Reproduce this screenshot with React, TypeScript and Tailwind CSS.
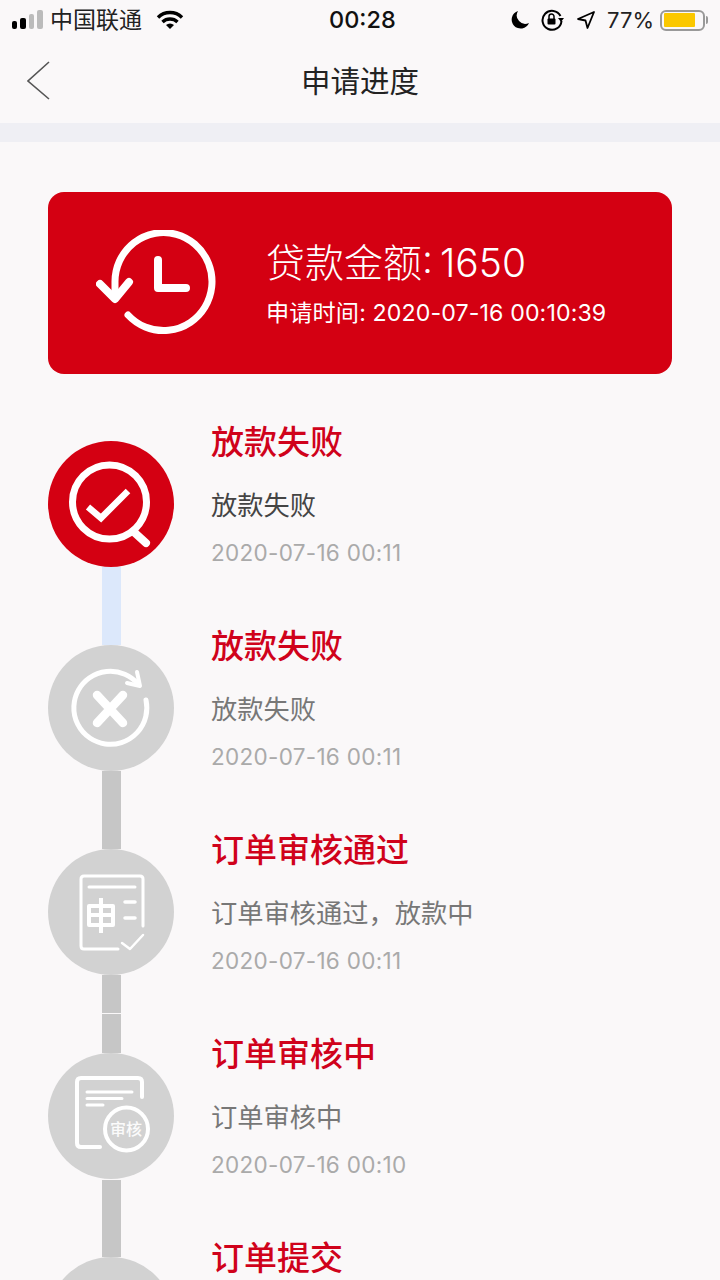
import type { ReactNode } from "react";

// stack for every text on the page: latin digits first, then CJK
const font = "font-['Inter','Noto_Sans_CJK_SC',sans-serif]";

function SearchCheckIcon() {
  return (
    <svg width="126" height="126" viewBox="0 0 126 126" fill="none" stroke="white" strokeLinecap="round" strokeLinejoin="round">
      <circle cx="61.5" cy="61" r="37" strokeWidth="7" />
      <path d="M87 92l11 10" strokeWidth="8" />
      <path d="M40 66l13 11 27-27" strokeWidth="6.500" strokeLinecap="butt" strokeLinejoin="miter" />
    </svg>
  );
}

function RetryCrossIcon() {
  return (
    <svg width="126" height="126" viewBox="0 0 126 126" fill="none" stroke="white" strokeLinecap="round" strokeLinejoin="round">
      <path d="M90 39A36.500 36.500 0 1 0 98 55" strokeWidth="5" />
      <path d="M89 27l3 14-13-3" strokeWidth="4" />
      <path d="M49 50l26 28M75 50L49 78" strokeWidth="8.500" />
    </svg>
  );
}

function ApplyIcon() {
  return (
    <svg width="126" height="126" viewBox="0 0 126 126" fill="none" stroke="white" strokeLinecap="round" strokeLinejoin="round">
      <path d="M95 77V30q0-3-3-3H36q-3 0-3 3v67q0 3 3 3h34" strokeWidth="3" />
      <path d="M41 38h46" strokeWidth="3" />
      <path d="M77 53h10M77 69h10" strokeWidth="3.500" />
      <path d="M41 57h24v19H41zM41 66h24M53 49v35" strokeWidth="4" strokeLinecap="butt" />
      <path d="M74 94l8 6 13-14" strokeWidth="2.500" />
    </svg>
  );
}

function ReviewIcon() {
  return (
    <svg width="126" height="126" viewBox="0 0 126 126" fill="none" stroke="white" strokeLinecap="round" strokeLinejoin="round">
      <path d="M52 94H33q-4 0-4-4V29q0-4 4-4h57q4 0 4 4v15" strokeWidth="4" />
      <path d="M39 39h45M39 45.500h35M39 52h16" strokeWidth="3" />
      <circle cx="78.500" cy="76" r="21.500" strokeWidth="4" />
    </svg>
  );
}

function BackIcon() {
  return (
    <svg width="24" height="40" viewBox="0 0 24 40" fill="none" stroke="#555" strokeWidth="1.6">
      <path d="M22 1L1 20l21 18" />
    </svg>
  );
}

function HistoryIcon() {
  return (
    <svg width="122" height="106" viewBox="96 230 122 106" fill="none" stroke="white" strokeLinecap="round" strokeLinejoin="round">
      <path d="M115 294v-12a48.500 49 0 1 1 13 33" strokeWidth="7" />
      <path d="M100 284l15 15 14-17" strokeWidth="8" />
      <path d="M158 260v28h28" strokeWidth="8" />
    </svg>
  );
}

function StatusBar() {
  return (
    <div className="flex h-10 items-center justify-between pl-3 pr-3">
      <div className="flex items-center">
        <svg width="32" height="20" viewBox="0 0 32 20" className="mr-[6px]">
          <rect x="0" y="11" width="5" height="8" rx="2" fill="#000" />
          <rect x="8" y="8" width="6" height="11" rx="2" fill="#000" />
          <rect x="17" y="4" width="5" height="15" rx="2" fill="#bbb" />
          <rect x="25" y="0" width="6" height="19" rx="2" fill="#bbb" />
        </svg>
        <span className="text-[23px] leading-none text-[#222]">中国联通</span>
        <svg width="28" height="20" viewBox="0 0 28 20" className="ml-[14px]" fill="none" stroke="#000" strokeWidth="3.4">
          <path d="M2 7.500a17 17 0 0 1 24 0" />
          <path d="M6.500 12a11 11 0 0 1 15 0" />
          <path d="M14 19l-4-4a6 6 0 0 1 8 0z" fill="#000" stroke="none" />
        </svg>
      </div>
      <span className="absolute left-[329px] text-[23.500px] leading-none font-medium text-[#111]">00:28</span>
      <div className="flex items-center">
        <svg width="20" height="20" viewBox="0 0 20 20" fill="#000">
          <path d="M8 1a9 9 0 1 0 11 12A8.500 8.500 0 0 1 8 1z" />
        </svg>
        <svg width="24" height="22" viewBox="0 0 24 22" className="ml-[11px]" fill="none" stroke="#000" strokeWidth="2">
          <path d="M19.500 7A9.500 9.500 0 1 0 20.500 12" />
          <path d="M17 9h6l-3 4z" fill="#000" stroke="none" />
          <rect x="6.500" y="9.500" width="8" height="6" rx="1" fill="#000" stroke="none" />
          <path d="M8 10V7.500a2.500 2.500 0 0 1 5 0V10" strokeWidth="1.500" />
        </svg>
        <svg width="18" height="18" viewBox="0 0 18 18" className="ml-[12px]" fill="none" stroke="#000" strokeWidth="1.800" strokeLinejoin="round">
          <path d="M17 1L1 8l7.500 1.500L10.500 17z" />
        </svg>
        <span className="ml-[12px] text-[22px] leading-none text-[#222]">77%</span>
        <div className="ml-[6px] flex h-[21px] w-[45px] items-center rounded-[6px] border-2 border-[#999] px-[2px]">
          <div className="h-[14px] w-[31px] rounded-[1px] bg-[#fbc800]" />
        </div>
        <div className="ml-[1px] h-[8px] w-[2px] rounded-r-full bg-[#999]" />
      </div>
    </div>
  );
}

type Step = {
  title: string;
  note?: string;
  time?: string;
  icon?: ReactNode;
  done?: boolean;
  // the original picture has a hairline seam in some connectors
  seam?: "top" | "middle";
};

const steps: Step[] = [
  { title: "放款失败", note: "放款失败", time: "2020-07-16 00:11", icon: <SearchCheckIcon />, done: true },
  { title: "放款失败", note: "放款失败", time: "2020-07-16 00:11", icon: <RetryCrossIcon /> },
  { title: "订单审核通过", note: "订单审核通过，放款中", time: "2020-07-16 00:11", icon: <ApplyIcon />, seam: "middle" },
  {
    title: "订单审核中",
    note: "订单审核中",
    time: "2020-07-16 00:10",
    seam: "top",
    icon: (
      <div className="relative">
        <ReviewIcon />
        <span className="absolute top-[68px] left-[62px] text-[16px] leading-none font-medium text-white/90">审核</span>
      </div>
    ),
  },
  // only the title of the last step fits on screen
  { title: "订单提交" },
];

function StepRow({ step }: { step: Step }) {
  return (
    <div className="flex h-[204px]">
      <div className="flex w-[126px] shrink-0 flex-col">
        <div className={`h-[126px] w-[126px] rounded-full ${step.done ? "bg-[#d40012]" : "bg-[#d2d2d2]"}`}>{step.icon}</div>
        <div className={`ml-[54px] h-[78px] w-[19px] ${step.done ? "bg-[#dce8fb]" : "bg-[#c6c6c6]"}`}>
          {step.seam === "top" && <div className="h-px bg-[#faf8f9]" />}
          {step.seam === "middle" && <div className="mt-[38px] h-px bg-[#faf8f9]" />}
        </div>
      </div>
      <div className="ml-[37px] -mt-[21px] flex flex-col">
        <div className="h-[44px] text-[33px] leading-[44px] font-medium text-[#d0021b]">{step.title}</div>
        {step.note && (
          <div className={`mt-[23px] h-[38px] text-[26.250px] leading-[38px] ${step.done ? "text-[#444]" : "text-[#777]"}`}>{step.note}</div>
        )}
        {step.time && <div className="mt-[9px] h-[38px] text-[22.500px] leading-[38px] tracking-[0.3px] text-[#aaa]">{step.time}</div>}
      </div>
    </div>
  );
}

export default function App() {
  return (
    <div className={`relative h-[1280px] w-[720px] overflow-hidden bg-[#faf8f9] ${font}`}>
      <StatusBar />
      <div className="relative flex h-[83px] items-center justify-center">
        <div className="absolute left-[27px] top-[21px]">
          <BackIcon />
        </div>
        <span className="text-[29.500px] text-[#222]">申请进度</span>
      </div>
      <div className="h-[19px] bg-[#efeff4]" />

      <div className="mx-12 mt-[50px] flex h-[182px] items-center rounded-2xl bg-[#d40012] pl-[48px] text-white">
        <HistoryIcon />
        <div className="ml-[48px] flex flex-col">
          <div className="text-[39px] leading-[50px] font-light [word-spacing:-4px]">贷款金额: 1650</div>
          <div className="mt-[10px] text-[23.200px] leading-[30px] tracking-[0.1px]">申请时间: 2020-07-16 00:10:39</div>
        </div>
      </div>

      <div className="mt-[67px] ml-12">
        {steps.map((step, i) => (
          <StepRow key={i} step={step} />
        ))}
      </div>
    </div>
  );
}
